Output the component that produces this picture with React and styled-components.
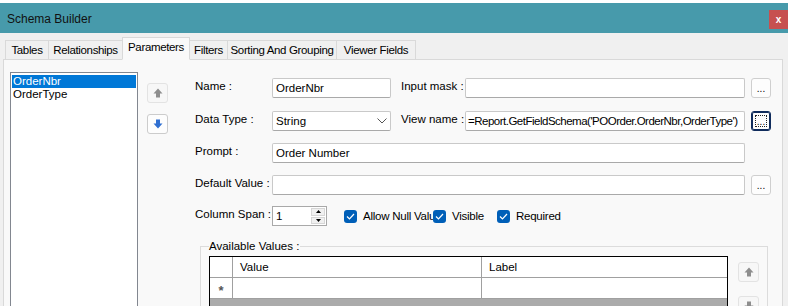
import React from 'react';
import styled, { createGlobalStyle } from 'styled-components';

const Global = createGlobalStyle`
  html, body { margin: 0; padding: 0; background: #ffffff; }
  body { font-family: "Liberation Sans", Arial, sans-serif; font-size: 11px; color: #000; }
  #root { width: 791px; height: 306px; overflow: hidden; }
  * { box-sizing: border-box; }
`;

const Window = styled.div`
  width: 788px;
  height: 306px;
  margin-top: 3px;
  background: #f0f0f0;
  display: flex;
  flex-direction: column;
  overflow: hidden;
`;

const TitleBar = styled.div`
  height: 30px;
  flex: none;
  background: #479aab;
  display: flex;
  align-items: center;
  justify-content: space-between;
  padding-left: 7px;
`;

const Title = styled.span`
  font-size: 12px;
  color: #111;
  margin-top: 1px;
`;

const CloseBtn = styled.div`
  width: 19px;
  height: 19px;
  margin-top: 3px;
  background: #c75050;
  color: #fff;
  font-weight: bold;
  font-size: 10px;
  display: flex;
  align-items: center;
  justify-content: center;
`;

const TabStrip = styled.div`
  height: 27px;
  flex: none;
  display: flex;
  align-items: flex-end;
  padding-left: 5px;
  position: relative;
  z-index: 1;
  margin-bottom: -1px;
`;

const Tab = styled.div`
  width: ${p => p.$w}px;
  flex: none;
  height: ${p => (p.$active ? '23px' : '20px')};
  border: 1px solid #d9d9d9;
  border-left-width: ${p => (p.$first || p.$active ? '1px' : '0')};
  border-bottom: ${p => (p.$active ? '1px solid #f9f9f9' : '1px solid #d9d9d9')};
  background: ${p => (p.$active ? '#f9f9f9' : '#f0f0f0')};
  display: flex;
  justify-content: center;
  align-items: ${p => (p.$active ? 'flex-start' : 'center')};
  padding-top: ${p => (p.$active ? '3px' : '0')};
  margin-left: ${p => (p.$active ? '-1px' : '0')};
  position: relative;
  z-index: ${p => (p.$active ? 2 : 1)};
  white-space: nowrap;
  font-size: 11.5px;
  letter-spacing: -0.35px;
`;

const Page = styled.div`
  flex: 1;
  margin-left: 3px;
  margin-right: 5px;
  border: 1px solid #d9d9d9;
  background: #f9f9f9;
  display: flex;
  align-items: flex-start;
  padding: 12px 11px 0 6px;
  min-width: 0;
`;

const ListBox = styled.div`
  width: 128px;
  height: 260px;
  flex: none;
  background: #fff;
  border: 1px solid #828790;
  padding: 2px 1px;
`;

const ListItem = styled.div`
  height: 13px;
  line-height: 13px;
  padding-left: 1px;
  font-size: 11.5px;
  background: ${p => (p.$selected ? '#0078d7' : 'transparent')};
  color: ${p => (p.$selected ? '#fff' : '#000')};
`;

const ArrowCol = styled.div`
  display: flex;
  flex-direction: column;
  gap: 11px;
  margin-left: 9px;
  padding-top: 11px;
`;

const IconBtn = styled.div`
  width: 21px;
  height: 20px;
  border: 1px solid ${p => (p.$disabled ? '#e3e3e3' : '#cccccc')};
  border-radius: 3px;
  background: ${p => (p.$disabled ? '#f7f7f7' : '#fdfdfd')};
  display: flex;
  align-items: center;
  justify-content: center;
`;

const Form = styled.div`
  flex: 1;
  min-width: 0;
  margin-left: 27px;
  padding-top: 6px;
  display: flex;
  flex-direction: column;
`;

const Row = styled.div`
  display: flex;
  align-items: flex-start;
  height: 20px;
  min-width: 0;
  margin-bottom: ${p => p.$mb ?? 12}px;
`;

const Label = styled.div`
  width: ${p => p.$w || 77}px;
  flex: none;
  margin-left: ${p => p.$ml || 0}px;
  font-size: 11.5px;
  line-height: 16px;
  white-space: nowrap;
`;

const Input = styled.div`
  height: 20px;
  width: ${p => (p.$w ? `${p.$w}px` : 'auto')};
  flex: ${p => (p.$w ? 'none' : '1')};
  min-width: 0;
  background: #fff;
  border: 1px solid #c9c9c9;
  border-bottom-color: #a9a9a9;
  border-radius: 2px;
  padding: 0 3px 0 ${p => (p.$tight ? 2 : 3)}px;
  display: flex;
  align-items: center;
  justify-content: space-between;
  font-size: 11.5px;
  letter-spacing: ${p => (p.$tight ? '-0.5px' : '0')};
  white-space: nowrap;
  overflow: hidden;
  margin-right: ${p => p.$mr || 0}px;
`;

const DotsBtn = styled.div`
  width: 20px;
  height: 20px;
  flex: none;
  margin-left: 6px;
  background: #fdfdfd;
  border: 1px solid ${p => (p.$focused ? '#102c5c' : '#cfcfcf')};
  box-shadow: ${p => (p.$focused ? 'inset 0 0 0 1px #102c5c' : 'none')};
  border-radius: 3px;
  display: flex;
  align-items: flex-end;
  justify-content: center;
  padding-bottom: 4px;
  font-size: 10px;
  line-height: 8px;
  position: relative;
  &::after {
    content: '';
    display: ${p => (p.$focused ? 'block' : 'none')};
    position: absolute;
    inset: 3px;
    border: 1px dotted #222;
  }
`;

const Spinner = styled.div`
  width: 55px;
  height: 20px;
  flex: none;
  background: #fff;
  border: 1px solid #a9a9a9;
  display: flex;
  align-items: stretch;
  font-size: 11.5px;
`;

const SpinValue = styled.div`
  flex: 1;
  padding-left: 3px;
  display: flex;
  align-items: center;
`;

const SpinButtons = styled.div`
  width: 15px;
  display: flex;
  flex-direction: column;
  padding: 1px 1px 1px 0;
  gap: 1px;
`;

const SpinBtn = styled.div`
  flex: 1;
  background: #f0f0f0;
  border: 1px solid #d6d6d6;
  display: flex;
  align-items: center;
  justify-content: center;
`;

const Check = styled.div`
  width: ${p => p.$w}px;
  flex: none;
  display: flex;
  align-items: center;
  height: 20px;
  overflow: hidden;
  white-space: nowrap;
  margin-left: ${p => p.$ml || 0}px;
  font-size: 11.5px;
  letter-spacing: -0.25px;
`;

const Box = styled.div`
  width: 13px;
  height: 13px;
  flex: none;
  border-radius: 3px;
  background: #005fb8;
  display: flex;
  align-items: center;
  justify-content: center;
  margin-right: 6px;
`;

const Group = styled.fieldset`
  margin: 14px 3px 0 5px;
  padding: 3px 8px 0 8px;
  border: 1px solid #dcdcdc;
  border-bottom: none;
  min-width: 0;
  display: flex;
  align-items: flex-start;
  height: 80px;
`;

const Legend = styled.legend`
  padding: 0 1px 0 0;
  margin-left: 0;
  font-size: 11.5px;
  line-height: 13px;
`;

const Grid = styled.div`
  width: 519px;
  height: 60px;
  flex: none;
  background: #ababab;
  border: 1px solid #000;
  border-bottom: none;
  display: flex;
  flex-direction: column;
`;

const GridRow = styled.div`
  height: ${p => p.$h}px;
  flex: none;
  display: grid;
  grid-template-columns: 23px 249px 1fr;
  background: #fff;
  border-bottom: 1px solid #a0a0a0;
`;

const Cell = styled.div`
  border-right: ${p => (p.$last ? 'none' : '1px solid #a0a0a0')};
  padding-left: ${p => (p.$head ? 0 : 7)}px;
  padding-top: ${p => (p.$head ? 5 : 0)}px;
  display: flex;
  align-items: center;
  justify-content: ${p => (p.$head ? 'center' : 'flex-start')};
  font-size: ${p => (p.$head ? 13 : 11.5)}px;
  font-weight: ${p => (p.$head ? 'bold' : 'normal')};
  color: ${p => (p.$head ? '#555' : '#000')};
`;

const SideBtns = styled.div`
  display: flex;
  flex-direction: column;
  gap: 14px;
  margin-left: 10px;
  margin-top: 6px;
`;

const ArrowUp = ({ color = '#8e8e8e' }) => (
  <svg width="10" height="10" viewBox="0 0 10 10">
    <path d="M5 0.5 L9.5 5.5 H7 V9.5 H3 V5.5 H0.5 Z" fill={color} />
  </svg>
);

const ArrowDown = ({ color = '#2f6fd1' }) => (
  <svg width="10" height="10" viewBox="0 0 10 10">
    <path d="M5 9.5 L9.5 4.5 H7 V0.5 H3 V4.5 H0.5 Z" fill={color} />
  </svg>
);

const Chevron = () => (
  <svg width="10" height="6" viewBox="0 0 10 6">
    <path d="M0.5 0.5 L5 5 L9.5 0.5" fill="none" stroke="#555" strokeWidth="1" />
  </svg>
);

const Tri = ({ up }) => (
  <svg width="5" height="3" viewBox="0 0 5 3">
    <path d={up ? 'M0 3 L2.5 0 L5 3 Z' : 'M0 0 L2.5 3 L5 0 Z'} fill="#000" />
  </svg>
);

const Tick = () => (
  <svg width="9" height="7" viewBox="0 0 9 7">
    <path d="M1 3.5 L3.5 6 L8 1" fill="none" stroke="#fff" strokeWidth="1.2" />
  </svg>
);

const tabs = [
  ['Tables', 44],
  ['Relationships', 74],
  ['Parameters', 68],
  ['Filters', 38],
  ['Sorting And Grouping', 109],
  ['Viewer Fields', 79],
];

export default function App() {
  return (
    <>
      <Global />
      <Window>
        <TitleBar>
          <Title>Schema Builder</Title>
          <CloseBtn>x</CloseBtn>
        </TitleBar>
        <TabStrip>
          {tabs.map(([t, w], i) => (
            <Tab key={t} $w={w} $first={i === 0} $active={t === 'Parameters'}>{t}</Tab>
          ))}
        </TabStrip>
        <Page>
          <ListBox>
            <ListItem $selected>OrderNbr</ListItem>
            <ListItem>OrderType</ListItem>
          </ListBox>
          <ArrowCol>
            <IconBtn $disabled><ArrowUp /></IconBtn>
            <IconBtn><ArrowDown /></IconBtn>
          </ArrowCol>
          <Form>
            <Row $mb={13}>
              <Label>Name :</Label>
              <Input $w={119}>OrderNbr</Input>
              <Label $w={64} $ml={10}>Input mask :</Label>
              <Input />
              <DotsBtn>...</DotsBtn>
            </Row>
            <Row>
              <Label>Data Type :</Label>
              <Input $w={119}>String<Chevron /></Input>
              <Label $w={64} $ml={10}>View name :</Label>
              <Input $tight>=Report.GetFieldSchema('POOrder.OrderNbr,OrderType')</Input>
              <DotsBtn $focused>...</DotsBtn>
            </Row>
            <Row>
              <Label>Prompt :</Label>
              <Input $mr={26}>Order Number</Input>
            </Row>
            <Row $mb={11}>
              <Label>Default Value :</Label>
              <Input />
              <DotsBtn>...</DotsBtn>
            </Row>
            <Row $mb={0}>
              <Label>Column Span :</Label>
              <Spinner>
                <SpinValue>1</SpinValue>
                <SpinButtons>
                  <SpinBtn><Tri up /></SpinBtn>
                  <SpinBtn><Tri /></SpinBtn>
                </SpinButtons>
              </Spinner>
              <Check $w={89} $ml={17}><Box><Tick /></Box>Allow Null Values</Check>
              <Check $w={64}><Box><Tick /></Box>Visible</Check>
              <Check $w={80}><Box><Tick /></Box>Required</Check>
            </Row>
            <Group>
              <Legend>Available Values :</Legend>
              <Grid>
                <GridRow $h={21}>
                  <Cell $head />
                  <Cell>Value</Cell>
                  <Cell $last>Label</Cell>
                </GridRow>
                <GridRow $h={21}>
                  <Cell $head>*</Cell>
                  <Cell />
                  <Cell $last />
                </GridRow>
              </Grid>
              <SideBtns>
                <IconBtn $disabled><ArrowUp /></IconBtn>
                <IconBtn $disabled><ArrowDown color="#8e8e8e" /></IconBtn>
              </SideBtns>
            </Group>
          </Form>
        </Page>
      </Window>
    </>
  );
}
